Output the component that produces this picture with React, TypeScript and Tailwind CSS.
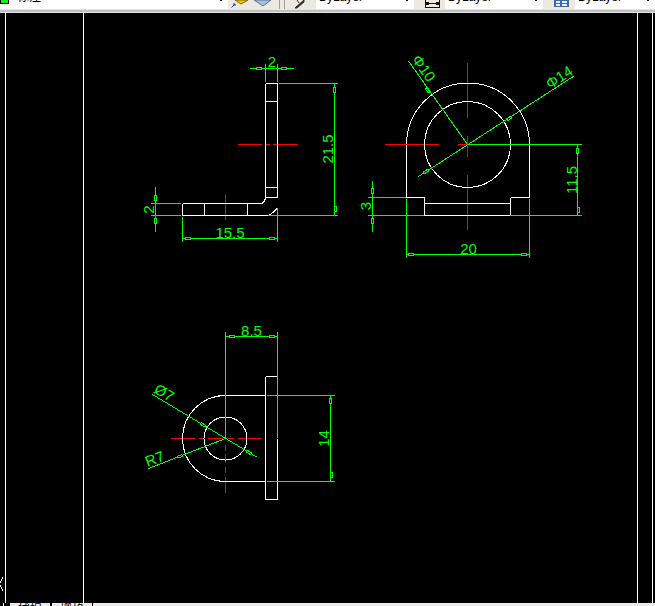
import type { ReactNode } from 'react'

const GREEN = '#00ff00'
const WHITE = '#ffffff'
const RED = '#ff0000'

type Seg = [number, number, number, number]

// page borders of the CAD sheet
const frame: Seg[] = [
  [5.5, 13, 5.5, 603],
  [83.5, 13, 83.5, 603],
  [637.5, 13, 637.5, 603],
  [652.5, 13, 652.5, 603],
  [3, 577, 0, 583],
  [0, 585, 3, 591],
]

const white: Seg[] = [
  // side view
  [265.5, 83.5, 277.5, 83.5],
  [265.5, 101.5, 277.5, 101.5],
  [265.5, 187.5, 277.5, 187.5],
  [265.5, 197.5, 277.5, 197.5],
  [265.5, 83.5, 265.5, 197.5],
  [277.5, 83.5, 277.5, 197.5],
  [182.5, 203.5, 262, 203.5],
  [182.5, 215.5, 268, 215.5],
  [182.5, 203.5, 182.5, 215.5],
  [204.5, 203.5, 204.5, 215.5],
  [247.5, 203.5, 247.5, 215.5],
  // front view
  [406.5, 144.5, 406.5, 197.5],
  [529.5, 144.5, 529.5, 197.5],
  [406.5, 197.5, 424.5, 197.5],
  [510.5, 197.5, 529.5, 197.5],
  [424.5, 197.5, 424.5, 215.5],
  [510.5, 197.5, 510.5, 215.5],
  [424.5, 203.5, 510.5, 203.5],
  [424.5, 215.5, 510.5, 215.5],
  // top view
  [218, 395.5, 265.5, 395.5],
  [219, 481.5, 265.5, 481.5],
  [265.5, 376.5, 277.5, 376.5],
  [265.5, 499.5, 277.5, 499.5],
  [265.5, 376.5, 265.5, 499.5],
  [277.5, 438.5, 277.5, 499.5],
]

const red: Seg[] = [
  [238, 144.5, 262, 144.5],
  [265, 144.5, 270, 144.5],
  [273, 144.5, 298, 144.5],
  [225.5, 194, 225.5, 220],
  [467.5, 63, 467.5, 118],
  [467.5, 136, 467.5, 157],
  [467.5, 175, 467.5, 230],
  [385, 144.5, 439, 144.5],
  [458, 144.5, 467, 144.5],
  [171, 438.5, 195, 438.5],
  [199, 438.5, 204, 438.5],
  [208, 438.5, 223, 438.5],
  [228, 438.5, 234, 438.5],
  [238, 438.5, 262, 438.5],
  [225.5, 445, 225.5, 451],
  [225.5, 454, 225.5, 463],
  [225.5, 467, 225.5, 473],
  [225.5, 477, 225.5, 493],
]

const green: Seg[] = [
  // side view dims
  [250, 68.5, 294, 68.5],
  [265.5, 64, 265.5, 82],
  [277.5, 64, 277.5, 82],
  [334.5, 83.5, 334.5, 215.5],
  [279, 83.5, 338, 83.5],
  [268, 215.5, 338, 215.5],
  [155.5, 187, 155.5, 232],
  [151, 203.5, 181, 203.5],
  [151, 215.5, 181, 215.5],
  [182.5, 238.5, 277.5, 238.5],
  [182.5, 217, 182.5, 242],
  [277.5, 208, 277.5, 242],
  // front view dims
  [467.5, 144.5, 582, 144.5],
  [510, 215.5, 582, 215.5],
  [577.5, 144.5, 577.5, 215.5],
  [408.5, 61, 467.5, 144.5],
  [418.5, 176.5, 574, 76],
  [372.5, 181, 372.5, 232],
  [368, 197.5, 406, 197.5],
  [368, 215.5, 424, 215.5],
  [406.5, 254.5, 529.5, 254.5],
  [406.5, 199, 406.5, 258],
  [529.5, 199, 529.5, 258],
  // top view dims
  [225.5, 332, 225.5, 438.5],
  [277.5, 332, 277.5, 438],
  [225.5, 336.5, 277.5, 336.5],
  [267, 395.5, 335, 395.5],
  [267, 481.5, 335, 481.5],
  [330.5, 395.5, 330.5, 481.5],
  [152.5, 394.5, 257.5, 457.5],
  [148.5, 468.5, 225.5, 438.5],
]

// hollow arrow marks: centre x, centre y, angle
const marks: [number, number, number][] = [
  [259, 68.5, 0], [284, 68.5, 180],
  [155.5, 197, 90], [155.5, 221.5, 270],
  [334.5, 89, 90], [334.5, 209, 270],
  [188, 238.5, 0], [272.5, 238.5, 180],
  [372.5, 190.5, 90], [372.5, 221.5, 270],
  [577.5, 150, 90], [577.5, 210, 270],
  [411, 254.5, 0], [524, 254.5, 180],
  [428, 90, 55], [509, 118, -33], [426, 171.5, -33],
  [231.5, 336.5, 0], [272.5, 336.5, 180],
  [330.5, 400, 90], [330.5, 475, 270],
  [202.5, 424.5, 31], [249, 452.5, 31], [179.5, 456.5, -21],
]

// dimension text: label, centre x, centre y, rotation
const labels: [string, number, number, number][] = [
  ['2', 272, 61, 0],
  ['21.5', 327.5, 149, -90],
  ['2', 148.5, 209.5, -90],
  ['15.5', 230, 232, 0],
  ['Φ10', 424, 68, 55],
  ['Φ14', 559, 77, -33],
  ['11.5', 571, 180, -90],
  ['3', 365.5, 206, -90],
  ['20', 468.5, 248, 0],
  ['8.5', 251.5, 330, 0],
  ['14', 323.5, 438.5, -90],
  ['Ø7', 164.5, 392.5, 31],
  ['R7', 154.5, 458.5, -21],
]

function Lines({ segs, color }: { segs: Seg[]; color: string }) {
  return (
    <>
      {segs.map(([x1, y1, x2, y2], i) => (
        <line key={i} x1={x1} y1={y1} x2={x2} y2={y2} stroke={color} strokeWidth={1} />
      ))}
    </>
  )
}

function Drawing() {
  return (
    <svg viewBox="0 13 655 590" className="block h-[590px] w-[655px] shrink-0" shapeRendering="crispEdges" fill="none">
      <Lines segs={frame} color={WHITE} />
      <Lines segs={red} color={RED} />
      <Lines segs={white} color={WHITE} />
      <path d="M265.5 197.5 Q265.5 201 262 203.5 M277 208 Q274 213 268 215.5" stroke={WHITE} />
      <path d="M406.5 144.5 A61 61 0 0 1 529.5 144.5" stroke={WHITE} />
      <circle cx={467.5} cy={144.5} r={43} stroke={WHITE} />
      <path d="M225.5 395.5 A43 43 0 0 0 225.5 481.5" stroke={WHITE} />
      <circle cx={225.5} cy={438.5} r={21.5} stroke={WHITE} />
      <Lines segs={green} color={GREEN} />
      {marks.map(([x, y, a], i) => (
        <rect
          key={i}
          x={Math.floor(x - 2.5) + 0.5}
          y={Math.floor(y - 1) + 0.5}
          width={5}
          height={2}
          stroke={GREEN}
          fill="#000000"
          transform={`rotate(${a} ${x} ${y})`}
        />
      ))}
      {labels.map(([t, x, y, a], i) => (
        <text
          key={i}
          x={x}
          y={y}
          textAnchor="middle"
          dominantBaseline="central"
          transform={a ? `rotate(${a} ${x} ${y})` : undefined}
          className="fill-[#00ff00] font-['Liberation_Sans',sans-serif] text-[15px]"
        >
          {t}
        </text>
      ))}
    </svg>
  )
}

// white combo field cut off by the window top, only the text's lower edge shows
function Field({ className, children }: { className: string; children: ReactNode }) {
  return (
    <div className={`relative h-[9px] shrink-0 overflow-hidden bg-white ${className}`}>
      <div className="absolute bottom-[5px] left-[3px] flex items-center whitespace-nowrap text-[12px] leading-[14px] text-black font-['Liberation_Sans','Noto_Sans_CJK_SC',sans-serif]">
        {children}
      </div>
      <div className="absolute right-[6px] top-0 h-[1px] w-[2px] bg-black" />
    </div>
  )
}

function LayerStateIcon() {
  return (
    <svg viewBox="0 0 17 9" className="h-[9px] w-[17px] shrink-0">
      <path d="M4 0 H17 L10 4 Z" fill="#f0c818" stroke="#7a6408" />
      <path d="M0.5 7.5 L4 4 M2 4 H4 V6" stroke="#103890" fill="none" />
    </svg>
  )
}

function LayerStackIcon() {
  return (
    <svg viewBox="0 0 19 9" className="h-[9px] w-[19px] shrink-0">
      <path d="M1 0 L10 6 L18 0 Z" fill="#a8c0dc" stroke="#587090" />
    </svg>
  )
}

function PenIcon() {
  return (
    <svg viewBox="0 0 11 9" className="h-[9px] w-[11px] shrink-0">
      <path d="M10 0 L2 7 L1 8 L3 8 L10 2 Z M3 0 L5 3" fill="#303030" stroke="#303030" />
    </svg>
  )
}

function DimIcon() {
  return (
    <svg viewBox="0 0 17 9" className="h-[9px] w-[17px] shrink-0" shapeRendering="crispEdges">
      <path d="M1.5 0 V8 M15.5 0 V8 M2 3.5 H15 M1 7.5 H16" stroke="#101010" fill="none" />
      <path d="M2 2 H5 V5 H2 Z M12 2 H15 V5 H12 Z" fill="#101010" />
    </svg>
  )
}

function TableIcon() {
  return (
    <svg viewBox="0 0 15 9" className="h-[9px] w-[15px] shrink-0" shapeRendering="crispEdges">
      <rect x={0} y={0} width={15} height={7} fill="#4068a8" />
      <path d="M2 1 H6 V3 H2 Z M8 1 H13 V3 H8 Z M2 4 H6 V6 H2 Z M8 4 H13 V6 H8 Z" fill="#e8f0f8" />
    </svg>
  )
}

function Toolbar() {
  return (
    <div className="h-[13px] shrink-0 bg-[#ece9e0]">
      <div className="flex h-[9px] items-start overflow-hidden">
        <Field className="w-[228px]">
          <span className="-ml-[3px] h-[5px] w-[9px] self-end border border-black bg-[#00ff00]" />
          <span className="ml-[8px]">标注</span>
        </Field>
        <div className="w-[3px] shrink-0" />
        <LayerStateIcon />
        <div className="w-[5px] shrink-0" />
        <LayerStackIcon />
        <div className="w-[7px] shrink-0" />
        <div className="h-[9px] w-[6px] shrink-0 border-x border-[#a0a0a0]" />
        <div className="w-[9px] shrink-0" />
        <PenIcon />
        <div className="w-[11px] shrink-0" />
        <Field className="w-[98px]">ByLayer</Field>
        <div className="w-[10px] shrink-0" />
        <DimIcon />
        <div className="w-[4px] shrink-0" />
        <Field className="w-[98px]">ByLayer</Field>
        <div className="w-[11px] shrink-0" />
        <TableIcon />
        <div className="w-[6px] shrink-0" />
        <Field className="flex-1">ByLayer</Field>
      </div>
      <div className="h-[4px] border-y border-[#e4e4e4] bg-[#c0c0c0]" />
    </div>
  )
}

// status buttons cut off by the window bottom
function StatusCell({ label }: { label: string }) {
  return (
    <div className="flex h-[3px] w-[40px] shrink-0 justify-center overflow-hidden bg-[#ececec]">
      <span className="whitespace-nowrap text-[12px] leading-[12px] text-black font-['Noto_Sans_CJK_SC',sans-serif]">{label}</span>
    </div>
  )
}

export default function App() {
  return (
    <div className="flex h-[606px] w-[655px] flex-col overflow-hidden bg-black">
      <Toolbar />
      <Drawing />
      <div className="flex h-[3px] shrink-0 bg-[#ececec]">
        <div className="flex w-[10px] shrink-0 bg-black pl-[3px]">
          <div className="h-[3px] w-[1px] bg-white" />
        </div>
        <StatusCell label="捕捉" />
        <div className="w-[2px] shrink-0 bg-black" />
        <StatusCell label="栅格" />
        <div className="w-[1px] shrink-0 bg-black" />
      </div>
    </div>
  )
}
